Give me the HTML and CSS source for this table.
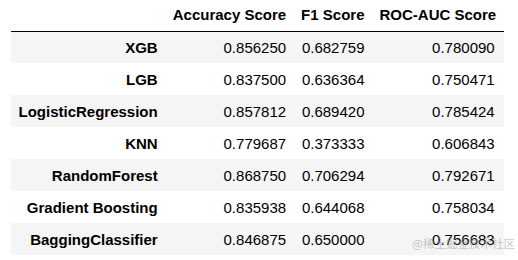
FILE: index.html
```html
<!DOCTYPE html>
<html>
<head>
<meta charset="utf-8">
<link rel="stylesheet" href="styles.css">
</head>
<body>
<table class="df">
  <thead>
    <tr><th></th><th>Accuracy Score</th><th>F1 Score</th><th>ROC-AUC Score</th></tr>
  </thead>
  <tbody>
    <tr><th>XGB</th><td>0.856250</td><td>0.682759</td><td>0.780090</td></tr>
    <tr><th>LGB</th><td>0.837500</td><td>0.636364</td><td>0.750471</td></tr>
    <tr><th>LogisticRegression</th><td>0.857812</td><td>0.689420</td><td>0.785424</td></tr>
    <tr><th>KNN</th><td>0.779687</td><td>0.373333</td><td>0.606843</td></tr>
    <tr><th>RandomForest</th><td>0.868750</td><td>0.706294</td><td>0.792671</td></tr>
    <tr><th>Gradient Boosting</th><td>0.835938</td><td>0.644068</td><td>0.758034</td></tr>
    <tr><th>BaggingClassifier</th><td>0.846875</td><td>0.650000</td><td>0.756683</td></tr>
  </tbody>
</table>
<div class="watermark">@稀土掘金技术社区</div>
</body>
</html>
```
FILE: styles.css
```css
html, body {
  margin: 0;
  padding: 0;
  background: #ffffff;
}
body {
  width: 518px;
  height: 260px;
  position: relative;
  overflow: hidden;
  font-family: "Liberation Sans", Arial, sans-serif;
  font-size: 15px;
  color: #000;
}
.df {
  border-collapse: collapse;
  border-spacing: 0;
  margin-left: 11px;
}
.df th, .df td {
  text-align: right;
  vertical-align: middle;
  padding: 0 7.5px;
  white-space: nowrap;
  line-height: 17px;
}
.df th {
  font-weight: bold;
}
.df thead tr {
  height: 31px;
}
.df thead th {
  border-bottom: 1px solid #000;
  padding-bottom: 1px;
}
.df tbody tr {
  height: 32px;
}
.df tbody tr:nth-child(odd) {
  background: #f5f5f5;
}
.df td:last-child {
  padding-right: 9px;
}
.watermark {
  position: absolute;
  left: 412px;
  top: 235px;
  font-family: "Noto Sans CJK SC", sans-serif;
  font-size: 11.5px;
  line-height: 16px;
  color: rgba(150, 150, 150, 0.55);
  white-space: nowrap;
}
```
